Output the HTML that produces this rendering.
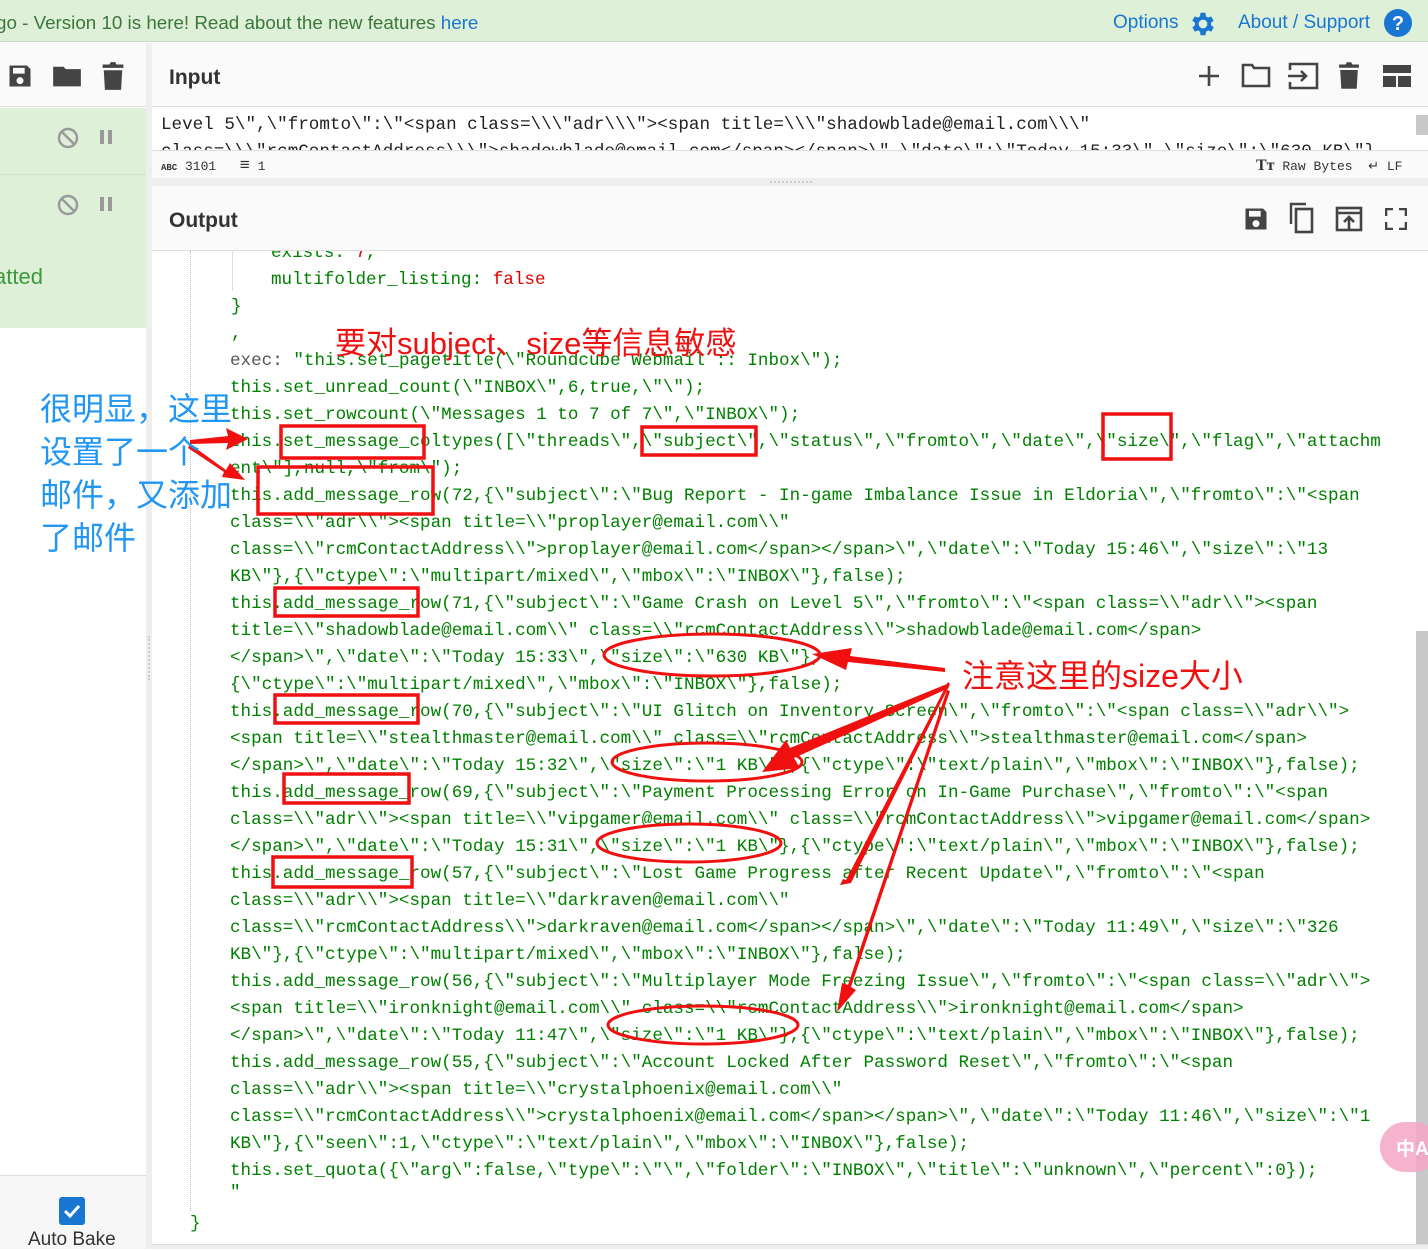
<!DOCTYPE html>
<html><head><meta charset="utf-8">
<style>
*{margin:0;padding:0;box-sizing:border-box}
body{width:1428px;height:1249px;overflow:hidden;background:#fff;position:relative;font-family:"Liberation Sans","Noto Sans CJK SC",sans-serif}
.abs{position:absolute}
#top{left:0;top:0;width:1428px;height:42px;background:#dff0d8;border-bottom:1px solid #cfd8cc}
#top .msg{left:-4px;top:12px;font-size:18.8px;color:#3c763d;white-space:nowrap}
#top .lnk{color:#1976d2}
.mono{font-family:"Liberation Mono",monospace;font-size:17.6px;white-space:pre}
.code div{position:absolute;left:230px;height:27px;line-height:27px;color:#008000}
.gray{color:#555}
.red{color:#d00}
.hdr{background:#fafafa;border-bottom:1px solid #ddd}
.ic{fill:#444}
</style></head><body>

<div id="top" class="abs">
  <div class="abs msg">go - Version 10 is here! Read about the new features <span class="lnk">here</span></div>
  <div class="abs" style="left:1113px;top:12px;font-size:19px;color:#1976d2">Options</div>
  <svg class="abs" style="left:1188px;top:9px" width="30" height="30" viewBox="0 0 24 24"><path fill="#1976d2" d="M19.4 13a7.5 7.5 0 0 0 0-2l2.1-1.6-2-3.5-2.5 1a7 7 0 0 0-1.7-1L15 3h-4l-.4 2.9a7 7 0 0 0-1.7 1l-2.5-1-2 3.5L6.6 11a7.5 7.5 0 0 0 0 2l-2.1 1.6 2 3.5 2.5-1a7 7 0 0 0 1.7 1L11 21h4l.4-2.9a7 7 0 0 0 1.7-1l2.5 1 2-3.5zM13 15.5a3.5 3.5 0 1 1 0-7 3.5 3.5 0 0 1 0 7z" transform="translate(-1 0)"/></svg>
  <div class="abs" style="left:1238px;top:12px;font-size:19px;color:#1976d2">About / Support</div>
  <svg class="abs" style="left:1384px;top:9px" width="28" height="28" viewBox="0 0 28 28"><circle cx="14" cy="14" r="14" fill="#1976d2"/><text x="14" y="21" text-anchor="middle" font-size="20" font-weight="bold" fill="#fff" font-family="Liberation Sans">?</text></svg>
</div>

<!-- left panel -->
<div class="abs" style="left:0;top:43px;width:146px;height:64px;background:#fafafa;border-bottom:1px solid #ddd"></div>
<svg class="abs" style="left:6px;top:62px" width="28" height="28" viewBox="0 0 24 24"><path class="ic" d="M3 3h15l3 3v15H3zM6 5v5h10V5zM12 13a3 3 0 1 0 0 6 3 3 0 0 0 0-6z"/></svg>
<svg class="abs" style="left:52px;top:62px" width="30" height="28" viewBox="0 0 26 24"><path class="ic" d="M1 4h9l2 2h13v15H1z"/></svg>
<svg class="abs" style="left:101px;top:61px" width="24" height="30" viewBox="0 0 20 26"><path class="ic" d="M1 3h6l1-2h4l1 2h6v3H1zM2 8h16l-1 17H3z"/></svg>
<div class="abs" style="left:0;top:108px;width:146px;height:220px;background:#dff0d8"></div>
<div class="abs" style="left:0;top:174px;width:146px;height:1px;background:#cfe3c7"></div>
<svg class="abs" style="left:57px;top:127px" width="22" height="22" viewBox="0 0 22 22"><circle cx="11" cy="11" r="9" fill="none" stroke="#999" stroke-width="2.4"/><path d="M4.5 4.5l13 13" stroke="#999" stroke-width="2.4"/></svg>
<div class="abs" style="left:100px;top:130px;width:4px;height:14px;background:#999"></div><div class="abs" style="left:108px;top:130px;width:4px;height:14px;background:#999"></div>
<svg class="abs" style="left:57px;top:194px" width="22" height="22" viewBox="0 0 22 22"><circle cx="11" cy="11" r="9" fill="none" stroke="#999" stroke-width="2.4"/><path d="M4.5 4.5l13 13" stroke="#999" stroke-width="2.4"/></svg>
<div class="abs" style="left:100px;top:197px;width:4px;height:14px;background:#999"></div><div class="abs" style="left:108px;top:197px;width:4px;height:14px;background:#999"></div>
<div class="abs" style="left:-6px;top:264px;font-size:22px;color:#3c9a3c">atted</div>
<div class="abs" style="left:0;top:1175px;width:146px;height:74px;background:#f7f7f7;border-top:1px solid #ddd"></div>
<div class="abs" style="left:59px;top:1197px;width:26px;height:28px;background:#1976d2;border-radius:3px"></div>
<svg class="abs" style="left:59px;top:1197px" width="26" height="28"><path d="M6 14l5 5 9-10" stroke="#fff" stroke-width="3" fill="none"/></svg>
<div class="abs" style="left:28px;top:1229px;font-size:19px;color:#333">Auto Bake</div>
<div class="abs" style="left:146px;top:43px;width:6px;height:1206px;background:#eee"></div>
<div class="abs" style="left:148px;top:636px;width:2px;height:44px;border-left:2px dotted #ccc"></div>

<!-- input -->
<div class="abs hdr" style="left:152px;top:43px;width:1276px;height:64px"></div>
<div class="abs" style="left:169px;top:66px;font-size:21px;font-weight:bold;color:#333">Input</div>
<svg class="abs" style="left:1196px;top:63px" width="26" height="26"><path d="M13 3v20M3 13h20" stroke="#444" stroke-width="2.6"/></svg>
<svg class="abs" style="left:1241px;top:62px" width="30" height="27" viewBox="0 0 30 27"><path d="M2 3h9l2 3h15v18H2z" fill="none" stroke="#444" stroke-width="2.6"/></svg>
<svg class="abs" style="left:1287px;top:62px" width="32" height="28" viewBox="0 0 32 28"><path d="M3 8V2h27v24H3v-6" fill="none" stroke="#444" stroke-width="2.6"/><path d="M1 14h18M14 9l5 5-5 5" fill="none" stroke="#444" stroke-width="2.6"/></svg>
<svg class="abs" style="left:1338px;top:61px" width="22" height="29" viewBox="0 0 20 26"><path class="ic" d="M1 3h6l1-2h4l1 2h6v3H1zM2 8h16l-1 17H3z"/></svg>
<svg class="abs" style="left:1382px;top:64px" width="30" height="24"><path class="ic" d="M1 1h28v8H1zM1 12h13v11H1zM16 12h13v11H16z"/></svg>
<div class="abs mono" style="left:152px;top:107px;width:1276px;height:43px;background:#fff;overflow:hidden">
<div class="abs" style="left:9px;top:5px;line-height:27px;color:#222">Level 5\",\"fromto\":\"&lt;span class=\\\"adr\\\"&gt;&lt;span title=\\\"shadowblade@email.com\\\"</div>
<div class="abs" style="left:9px;top:32px;line-height:27px;color:#222">class=\\\"rcmContactAddress\\\"&gt;shadowblade@email.com&lt;/span&gt;&lt;/span&gt;\",\"date\":\"Today 15:33\",\"size\":\"630 KB\"}</div>
</div>
<div class="abs" style="left:1416px;top:115px;width:12px;height:20px;background:#c8c8c8"></div>
<div class="abs" style="left:152px;top:150px;width:1276px;height:28px;background:#fafafa;border-top:1px solid #ddd"></div>
<div class="abs mono" style="left:161px;top:157px;font-size:13px;color:#333"><b style="font-size:9px">ABC</b> 3101   <span style="font-size:17px">≡</span> 1</div>
<div class="abs mono" style="left:1256px;top:157px;font-size:13px;color:#333"><b style="font-size:16px;font-family:Liberation Serif">Tт</b> Raw Bytes  <span>↵</span> LF</div>
<div class="abs" style="left:152px;top:178px;width:1276px;height:8px;background:#eee"></div>
<div class="abs" style="left:770px;top:181px;width:42px;height:2px;border-top:2px dotted #ccc"></div>

<!-- output -->
<div class="abs hdr" style="left:152px;top:186px;width:1276px;height:65px"></div>
<div class="abs" style="left:169px;top:209px;font-size:21px;font-weight:bold;color:#333">Output</div>
<svg class="abs" style="left:1242px;top:205px" width="28" height="28" viewBox="0 0 24 24"><path class="ic" d="M3 3h15l3 3v15H3zM6 5v5h10V5zM12 13a3 3 0 1 0 0 6 3 3 0 0 0 0-6z"/></svg>
<svg class="abs" style="left:1288px;top:202px" width="28" height="32"><path d="M3 22V2h15" fill="none" stroke="#444" stroke-width="2.4"/><rect x="8" y="7" width="16" height="23" fill="none" stroke="#444" stroke-width="2.6"/></svg>
<svg class="abs" style="left:1335px;top:206px" width="28" height="26"><rect x="2" y="2" width="24" height="22" fill="none" stroke="#444" stroke-width="2.6"/><path d="M2 7h24M14 24V12M9 16l5-5 5 5" fill="none" stroke="#444" stroke-width="2.6"/></svg>
<svg class="abs" style="left:1385px;top:208px" width="22" height="22"><path d="M1 8V1h7M14 1h7v7M21 14v7h-7M8 21H1v-7" fill="none" stroke="#444" stroke-width="2.6"/></svg>

<div class="abs" style="left:152px;top:251px;width:1276px;height:993px;background:#fff;overflow:hidden">
 <div class="abs" style="left:38px;top:0;height:960px;border-left:1px dotted #bbb"></div>
 <div class="abs" style="left:80px;top:0;height:40px;border-left:1px solid #ddd"></div>
 <div class="abs" style="left:1264px;top:380px;width:12px;height:613px;background:#c8c8c8"></div>
</div>
<div class="abs" style="left:152px;top:1244px;width:1276px;height:5px;background:#eee;border-top:1px solid #ddd"></div>

<div class="abs code mono" style="left:0;top:2px;width:1428px;height:1249px;overflow:hidden;clip-path:inset(249px 0 7px 0)">
<div style="top:238px;left:271px" class="gray">exists: <span class="red">7</span>,</div>
<div style="top:265px;left:271px" class="gray">multifolder_listing: <span class="red">false</span></div>
<div style="top:292px;left:231px" class="gray">}</div>
<div style="top:319px;left:231px" class="gray">,</div>
<div style="top:346px"><span class="gray">exec: </span>"this.set_pagetitle(\"Roundcube Webmail :: Inbox\");</div>
<div style="top:373px">this.set_unread_count(\"INBOX\",6,true,\"\");</div>
<div style="top:400px">this.set_rowcount(\"Messages 1 to 7 of 7\",\"INBOX\");</div>
<div style="top:427px">this.set_message_coltypes([\"threads\",\"subject\",\"status\",\"fromto\",\"date\",\"size\",\"flag\",\"attachm</div>
<div style="top:454px">ent\"],null,\"from\");</div>
<div style="top:481px">this.add_message_row(72,{\"subject\":\"Bug Report - In-game Imbalance Issue in Eldoria\",\"fromto\":\"&lt;span</div>
<div style="top:508px">class=\\"adr\\"&gt;&lt;span title=\\"proplayer@email.com\\"</div>
<div style="top:535px">class=\\"rcmContactAddress\\"&gt;proplayer@email.com&lt;/span&gt;&lt;/span&gt;\",\"date\":\"Today 15:46\",\"size\":\"13</div>
<div style="top:562px">KB\"},{\"ctype\":\"multipart/mixed\",\"mbox\":\"INBOX\"},false);</div>
<div style="top:589px">this.add_message_row(71,{\"subject\":\"Game Crash on Level 5\",\"fromto\":\"&lt;span class=\\"adr\\"&gt;&lt;span</div>
<div style="top:616px">title=\\"shadowblade@email.com\\" class=\\"rcmContactAddress\\"&gt;shadowblade@email.com&lt;/span&gt;</div>
<div style="top:643px">&lt;/span&gt;\",\"date\":\"Today 15:33\",\"size\":\"630 KB\"},</div>
<div style="top:670px">{\"ctype\":\"multipart/mixed\",\"mbox\":\"INBOX\"},false);</div>
<div style="top:697px">this.add_message_row(70,{\"subject\":\"UI Glitch on Inventory Screen\",\"fromto\":\"&lt;span class=\\"adr\\"&gt;</div>
<div style="top:724px">&lt;span title=\\"stealthmaster@email.com\\" class=\\"rcmContactAddress\\"&gt;stealthmaster@email.com&lt;/span&gt;</div>
<div style="top:751px">&lt;/span&gt;\",\"date\":\"Today 15:32\",\"size\":\"1 KB\"},{\"ctype\":\"text/plain\",\"mbox\":\"INBOX\"},false);</div>
<div style="top:778px">this.add_message_row(69,{\"subject\":\"Payment Processing Error on In-Game Purchase\",\"fromto\":\"&lt;span</div>
<div style="top:805px">class=\\"adr\\"&gt;&lt;span title=\\"vipgamer@email.com\\" class=\\"rcmContactAddress\\"&gt;vipgamer@email.com&lt;/span&gt;</div>
<div style="top:832px">&lt;/span&gt;\",\"date\":\"Today 15:31\",\"size\":\"1 KB\"},{\"ctype\":\"text/plain\",\"mbox\":\"INBOX\"},false);</div>
<div style="top:859px">this.add_message_row(57,{\"subject\":\"Lost Game Progress after Recent Update\",\"fromto\":\"&lt;span</div>
<div style="top:886px">class=\\"adr\\"&gt;&lt;span title=\\"darkraven@email.com\\"</div>
<div style="top:913px">class=\\"rcmContactAddress\\"&gt;darkraven@email.com&lt;/span&gt;&lt;/span&gt;\",\"date\":\"Today 11:49\",\"size\":\"326</div>
<div style="top:940px">KB\"},{\"ctype\":\"multipart/mixed\",\"mbox\":\"INBOX\"},false);</div>
<div style="top:967px">this.add_message_row(56,{\"subject\":\"Multiplayer Mode Freezing Issue\",\"fromto\":\"&lt;span class=\\"adr\\"&gt;</div>
<div style="top:994px">&lt;span title=\\"ironknight@email.com\\" class=\\"rcmContactAddress\\"&gt;ironknight@email.com&lt;/span&gt;</div>
<div style="top:1021px">&lt;/span&gt;\",\"date\":\"Today 11:47\",\"size\":\"1 KB\"},{\"ctype\":\"text/plain\",\"mbox\":\"INBOX\"},false);</div>
<div style="top:1048px">this.add_message_row(55,{\"subject\":\"Account Locked After Password Reset\",\"fromto\":\"&lt;span</div>
<div style="top:1075px">class=\\"adr\\"&gt;&lt;span title=\\"crystalphoenix@email.com\\"</div>
<div style="top:1102px">class=\\"rcmContactAddress\\"&gt;crystalphoenix@email.com&lt;/span&gt;&lt;/span&gt;\",\"date\":\"Today 11:46\",\"size\":\"1</div>
<div style="top:1129px">KB\"},{\"seen\":1,\"ctype\":\"text/plain\",\"mbox\":\"INBOX\"},false);</div>
<div style="top:1156px">this.set_quota({\"arg\":false,\"type\":\"\",\"folder\":\"INBOX\",\"title\":\"unknown\",\"percent\":0});</div>
<div style="top:1178px">"</div>
<div style="top:1209px;left:190px" class="gray">}</div>
</div>

<!-- translate bubble -->
<div class="abs" style="left:1380px;top:1122px;width:60px;height:50px;border-radius:25px;background:#f4a6c6;opacity:.85"></div>
<div class="abs" style="left:1396px;top:1134px;color:#fff;font-size:19px;font-weight:bold;white-space:nowrap">中A</div>

<!-- annotations -->
<svg class="abs" style="left:0;top:0" width="1428" height="1249">
<g fill="none" stroke="#f01010" stroke-width="3.5">
<rect x="281" y="426" width="143" height="32"/>
<rect x="642" y="427" width="114" height="28"/>
<rect x="1103" y="414" width="68" height="45"/>
<rect x="258" y="467" width="175" height="47"/>
<rect x="275" y="588" width="143" height="28"/>
<rect x="275" y="695" width="143" height="28"/>
<rect x="284" y="774" width="125" height="29"/>
<rect x="273" y="857" width="139" height="30"/>
<ellipse cx="712" cy="655" rx="108" ry="21" stroke-width="3"/>
<ellipse cx="707" cy="762" rx="95" ry="19" stroke-width="3"/>
<ellipse cx="689" cy="843" rx="92" ry="19" stroke-width="3"/>
<ellipse cx="703" cy="1025" rx="95" ry="19" stroke-width="3"/>
</g>
<g fill="#f01010">
<polygon points="190,440 228,436 226,428 248,439 226,450 228,443 190,444"/>
<polygon points="190,444 226,470 230,463 245,480 222,477 224,472 188,448"/>
<polygon points="945,668 850,656 852,648 812,654 846,670 848,662 945,672"/>
<polygon points="947,684 790,748 786,740 762,772 800,768 794,758 949,688"/>
<polygon points="947,690 848,985 842,983 837,1012 856,990 851,987 950,691"/>
<polygon points="948,682 846,880 843,879 840,885 851,883 950,684"/>
</g>
<text x="335" y="354" font-size="31" fill="#f01010" font-family="Liberation Sans,Noto Sans CJK SC,sans-serif">要对subject、size等信息敏感</text>
<text x="962" y="687" font-size="32" fill="#f01010" font-family="Liberation Sans,Noto Sans CJK SC,sans-serif">注意这里的size大小</text>
<g font-size="32" fill="#2196f3" font-family="Liberation Sans,Noto Sans CJK SC,sans-serif">
<text x="40" y="420">很明显，这里</text>
<text x="40" y="463">设置了一个</text>
<text x="40" y="506">邮件，又添加</text>
<text x="40" y="549">了邮件</text>
</g>
</svg>
</body></html>
